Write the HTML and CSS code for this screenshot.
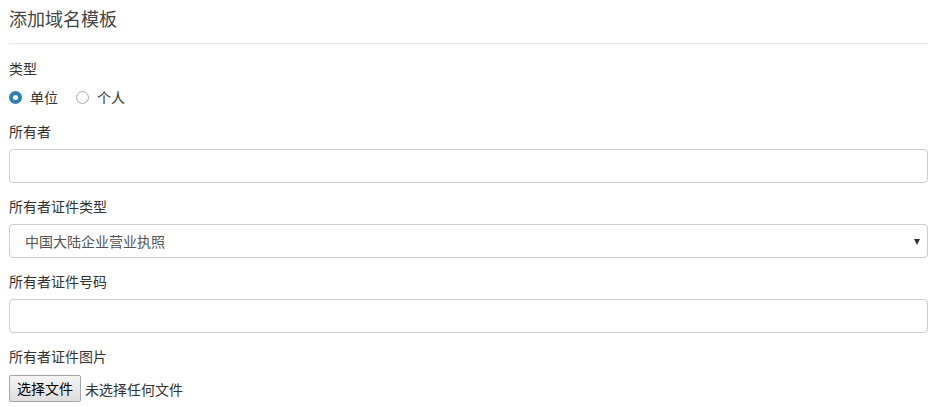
FILE: index.html
```html
<!DOCTYPE html>
<html lang="zh">
<head>
<meta charset="utf-8">
<link rel="stylesheet" href="styles.css">
</head>
<body>
<div class="page">
  <h3 class="title">添加域名模板</h3>
  <hr class="rule">
  <form class="form">
    <div class="group">
      <div class="label">类型</div>
      <div class="radios">
        <label class="radio"><span class="dot checked"></span>单位</label>
        <label class="radio"><span class="dot"></span>个人</label>
      </div>
    </div>
    <div class="group">
      <div class="label">所有者</div>
      <div class="control"></div>
    </div>
    <div class="group">
      <div class="label">所有者证件类型</div>
      <div class="control select"><span class="value">中国大陆企业营业执照</span><span class="arrow"></span></div>
    </div>
    <div class="group">
      <div class="label">所有者证件号码</div>
      <div class="control"></div>
    </div>
    <div class="group">
      <div class="label">所有者证件图片</div>
      <div class="file"><span class="file-btn">选择文件</span><span class="file-name">未选择任何文件</span></div>
    </div>
  </form>
</div>
</body>
</html>
```
FILE: styles.css
```css
* { box-sizing: border-box; }
html, body { margin: 0; padding: 0; background: #fff; }
body {
  font-family: "Noto Sans CJK SC", "Noto Sans", sans-serif;
  font-size: 14px;
  color: #333;
}
.page { width: 919px; margin-left: 9px; }
.title {
  margin: 0;
  padding-top: 5px;
  font-size: 18px;
  font-weight: normal;
  line-height: 26px;
  color: #444;
}
.rule {
  margin: 12px 0 0;
  border: 0;
  border-top: 1px solid #e5e5e5;
  height: 0;
}
.form { display: flex; flex-direction: column; }
.group { display: flex; flex-direction: column; }
.label { line-height: 20px; height: 20px; }
.group:first-child .label { margin-top: 14px; }
.group + .group .label { margin-top: 13px; }
.group:nth-child(2) .label { margin-top: 14px; }
.group .label + .control { margin-top: 8px; }
.radios { display: flex; gap: 18px; margin-top: 9px; height: 20px; align-items: center; }
.radio { display: flex; align-items: center; gap: 8px; line-height: 20px; }
.dot {
  width: 13px; height: 13px; border-radius: 50%;
  border: 1px solid #a9a9ad; background: #fff;
  display: inline-block;
}
.dot.checked {
  border: 4px solid #2f7fb8;
  background: #fff;
}
.control {
  height: 34px;
  border: 1px solid #ccc;
  border-radius: 4px;
  background: #fff;
}
.select {
  display: flex; align-items: center; justify-content: space-between;
  padding: 0 7px 0 15px;
  color: #555;
}
.arrow {
  width: 0; height: 0;
  border-left: 3.5px solid transparent;
  border-right: 3.5px solid transparent;
  border-top: 6px solid #333;
  margin-top: 1px;
}
.file { display: flex; align-items: center; gap: 4px; margin-top: 9px; }
.file-btn {
  display: inline-block;
  height: 27px; line-height: 25px;
  padding: 0 7px;
  border: 1px solid #a6a6a6;
  border-radius: 2px;
  background: linear-gradient(#f4f4f4, #dedede);
  color: #000;
}
.file-name { color: #333; }
```
